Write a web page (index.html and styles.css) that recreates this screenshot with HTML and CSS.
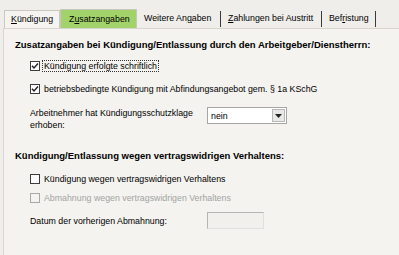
FILE: index.html
```html
<!DOCTYPE html>
<html lang="de">
<head>
    <meta charset="UTF-8">
    <title>Kündigung</title>
    <link rel="stylesheet" href="styles.css">
</head>
<body>
    <div class="tabs">
        <div class="tab tab-raised"><u>K</u>ündigung</div>
        <div class="tab tab-active">Z<u>u</u>satzangaben</div>
        <div class="tab tab-plain tab-weitere">Weitere An<u>g</u>aben</div>
        <div class="tab tab-plain tab-zahlungen"><u>Z</u>ahlungen bei Austritt</div>
        <div class="tab tab-plain tab-befristung">Bef<u>r</u>istung</div>
    </div>

    <div class="panel">
        <div class="heading">Zusatzangaben bei Kündigung/Entlassung durch den Arbeitgeber/Dienstherrn:</div>

        <label class="check row-first">
            <span class="box"><svg width="8" height="8" viewBox="0 0 8 8"><path d="M1 3.8 L3 6 L7 1.5" fill="none" stroke="#222" stroke-width="1.4"/></svg></span>
            <span class="focus">Kündigung erfolgte schriftlich</span>
        </label>

        <label class="check row-second">
            <span class="box"><svg width="8" height="8" viewBox="0 0 8 8"><path d="M1 3.8 L3 6 L7 1.5" fill="none" stroke="#222" stroke-width="1.4"/></svg></span>
            <span>betriebsbedingte Kündigung mit Abfindungsangebot gem. § 1a KSchG</span>
        </label>

        <div class="field row-select">
            <span class="field-label">Arbeitnehmer hat Kündigungsschutzklage erhoben:</span>
            <div class="select">
                <span class="select-value">nein</span>
                <span class="select-btn"><svg width="7" height="4" viewBox="0 0 7 4"><path d="M0 0 H7 L3.5 4 Z" fill="#222"/></svg></span>
            </div>
        </div>

        <div class="heading heading-second">Kündigung/Entlassung wegen vertragswidrigen Verhaltens:</div>

        <label class="check row-third">
            <span class="box"></span>
            <span>Kündigung wegen vertragswidrigen Verhaltens</span>
        </label>

        <label class="check check-disabled row-fourth">
            <span class="box"></span>
            <span>Abmahnung wegen vertragswidrigen Verhaltens</span>
        </label>

        <div class="field row-date">
            <span class="field-label">Datum der vorherigen Abmahnung:</span>
            <div class="date-input"></div>
        </div>
    </div>
</body>
</html>
```

FILE: styles.css
```css
html, body {
    height: 100%;
}

body {
    margin: 0;
    background-color: #efeeea;
    color: #000;
    font-family: "Liberation Sans", Arial, sans-serif;
    font-size: 8.8px;
    overflow: hidden;
}

.tabs {
    display: flex;
    align-items: flex-end;
    height: 28px;
    padding-left: 4px;
    box-sizing: border-box;
}

.tab {
    box-sizing: border-box;
    white-space: nowrap;
}

.tab u {
    text-decoration-thickness: 1px;
    text-underline-offset: 1px;
}

.tab-raised {
    width: 56px;
    height: 18px;
    line-height: 16px;
    padding-left: 6px;
    border: 1px solid #cbc8bf;
    border-bottom: none;
    background-color: #f5f4f1;
}

.tab-active {
    width: 77px;
    height: 19px;
    line-height: 18px;
    padding-left: 8px;
    background-color: #a2d36b;
    border: 1px solid #c9c6bc;
    border-bottom: none;
}

.tab-plain {
    height: 16px;
    line-height: 14px;
    margin-bottom: 1px;
    padding-left: 7px;
    border-right: 1px solid #3a3a3a;
}

.tab-weitere {
    width: 84px;
}

.tab-zahlungen {
    width: 101px;
}

.tab-befristung {
    width: 54px;
}

.panel {
    margin-left: 3px;
    height: 227px;
    padding: 10px 0 0 11px;
    background-color: #f4f3ef;
    border-top: 1px solid #d9d6cd;
    border-left: 1px solid #d9d6cd;
    box-sizing: border-box;
    display: flex;
    flex-direction: column;
    align-items: flex-start;
}

.heading {
    font-weight: bold;
    font-size: 9.5px;
    line-height: 12px;
    white-space: nowrap;
}

.heading-second {
    margin-top: 19px;
}

.check {
    display: flex;
    align-items: center;
    height: 14px;
    margin-left: 15px;
    white-space: nowrap;
}

.box {
    width: 10px;
    height: 10px;
    box-sizing: border-box;
    border: 1px solid #3d3d3d;
    background-color: #fff;
    margin-right: 4px;
    display: flex;
    align-items: center;
    justify-content: center;
}

.focus {
    outline: 1px dotted #333;
    padding: 0 1px;
    margin-left: -1px;
}

.check-disabled {
    color: #a3a3a3;
}

.check-disabled .box {
    border-color: #a8a8a8;
    background-color: #f4f3ef;
}

.row-first {
    margin-top: 8px;
}

.row-second {
    margin-top: 9px;
}

.row-third {
    margin-top: 10px;
}

.row-fourth {
    margin-top: 5px;
}

.field {
    display: grid;
    grid-template-columns: 177px auto;
    margin-left: 15px;
    line-height: 12px;
}

.row-select {
    margin-top: 11px;
}

.row-date {
    margin-top: 7px;
    align-items: center;
}

.select {
    width: 80px;
    height: 17px;
    box-sizing: border-box;
    border: 1px solid #a5a5a5;
    background-color: #fff;
    display: flex;
    align-items: center;
    justify-content: space-between;
}

.select-value {
    padding-left: 3px;
}

.select-btn {
    width: 13px;
    height: 13px;
    margin-right: 1px;
    box-sizing: border-box;
    border: 1px solid #b8b8b8;
    background-color: #e8e8e6;
    display: flex;
    align-items: center;
    justify-content: center;
}

.date-input {
    width: 57px;
    height: 17px;
    box-sizing: border-box;
    border: 1px solid #b5b5b5;
    border-right-color: #e0e0e0;
    border-bottom-color: #e0e0e0;
    background-color: #f1f0ec;
}
```
